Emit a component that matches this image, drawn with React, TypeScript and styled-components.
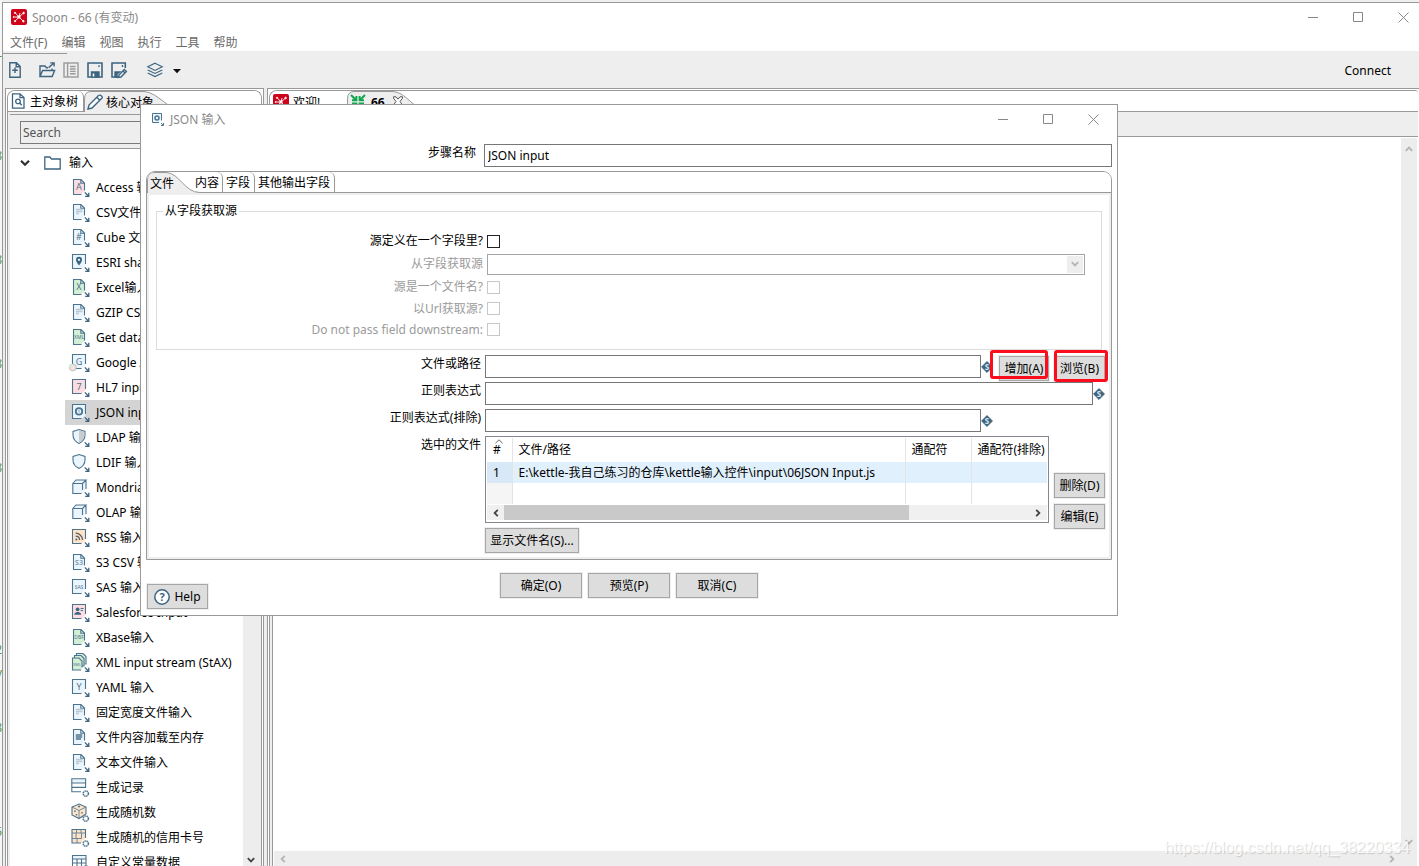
import React from "react";
import styled, { createGlobalStyle, css } from "styled-components";

const line = "#999999";
const face = "#eeeeee";
const ink = "#3d6480";
const softInk = "#4d748e";

const GlobalStyle = createGlobalStyle`
  *, *::before, *::after { box-sizing: border-box; }
  body { margin: 0; background: #efefef; }
  body, button, input, select, table {
    font-family: "Noto Sans", "Noto Sans CJK SC", sans-serif;
    font-size: 12px;
    line-height: 16px;
    color: #000;
  }
  button { padding: 0; border: 0; background: none; }
  svg { display: block; flex: none; overflow: visible; }
`;

const Desktop = styled.div`
  display: flex;
  height: 100vh;
  overflow: hidden;
  position: relative;
`;

const Gutter = styled.div`
  flex: none;
  width: 2px;
  overflow: hidden;
  color: #5a9433;
  background: #f6f6f6;
`;

const GutterCell = styled.div<{ $h: number }>`
  height: ${(p) => p.$h}px;
  display: flex;
  align-items: flex-end;
  justify-content: flex-end;
  line-height: 12px;
`;

const Window = styled.main`
  flex: 1;
  min-width: 0;
  margin-top: 2px;
  display: flex;
  flex-direction: column;
  border-top: 1px solid ${line};
  border-left: 1px solid ${line};
  background: ${face};
`;

const TitleBar = styled.header<{ $dialog?: boolean }>`
  flex: none;
  display: flex;
  align-items: center;
  gap: ${(p) => (p.$dialog ? 6 : 5)}px;
  height: 28px;
  padding: ${(p) => (p.$dialog ? "0 9px 0 10px" : "0 1px 0 8px")};
  background: #fff;
  color: #8a8a8a;
`;

const WindowTitle = styled.h1`
  flex: 1;
  margin: 0;
  padding-top: 2px;
  font-size: 12px;
  font-weight: 400;
  line-height: 16px;
`;

const WindowButtons = styled.div`
  display: flex;
  gap: 15px;
`;

const WindowButton = styled.button`
  width: 30px;
  height: 24px;
  display: flex;
  align-items: center;
  justify-content: center;
`;

const MenuBar = styled.nav`
  flex: none;
  display: flex;
  gap: 14px;
  height: 20px;
  padding: 4px 7px 0;
  background: #fff;
`;

const MenuItem = styled.button`
  height: 16px;
  color: #6a6a6a;
`;

const ToolBar = styled.div`
  flex: none;
  height: 37px;
  padding-top: 2px;
`;

const ToolBarRule = styled.div`
  width: 64px;
  height: 1px;
  background: ${line};
`;

const ToolRow = styled.div`
  display: flex;
  align-items: center;
  gap: 8px;
  height: 32px;
  padding: 0 28px 0 4px;
`;

const ToolButton = styled.button<{ $after?: number }>`
  margin-right: ${(p) => p.$after ?? 0}px;
`;

const Connect = styled.button`
  margin-left: auto;
  padding-top: 2px;
`;

const Workspace = styled.div`
  flex: 1;
  min-height: 0;
  display: flex;
  gap: 3px;
  padding-left: 2px;
`;

const Pane = styled.section<{ $side?: boolean }>`
  display: flex;
  min-width: 0;
  padding: 1px 1px 0 1px;
  background: #fff;
  border: solid ${line};
  ${(p) =>
    p.$side
      ? css`
          flex: none;
          width: 259px;
          border-width: 1px 1px 0 1px;
        `
      : css`
          flex: 1;
          border-width: 1px 0 0 1px;
        `}
`;

const Folder = styled.div<{ $open?: boolean }>`
  flex: 1;
  min-width: 0;
  display: flex;
  flex-direction: column;
  overflow: hidden;
  border: solid ${line};
  border-width: 1px 1px 0 1px;
  border-radius: 8px 8px 0 0;
  ${(p) => p.$open && "border-right-width: 0; border-radius: 8px 3px 0 0;"}
`;

const TabStrip = styled.div`
  flex: none;
  display: flex;
  height: 21px;
  border-bottom: 1px solid ${line};
  background: #fff;
`;

const Tab = styled.button<{ $w: number; $gap?: number; $edge?: boolean; $bold?: boolean }>`
  position: relative;
  flex: none;
  display: flex;
  align-items: center;
  gap: ${(p) => p.$gap ?? 5}px;
  width: ${(p) => p.$w}px;
  height: 21px;
  padding: 0 3px;
  white-space: nowrap;
  font-weight: ${(p) => (p.$bold ? 700 : 400)};
  ${(p) =>
    p.$edge &&
    css`
      height: 20px;
      border-right: 1px solid ${line};
      border-top-right-radius: 6px;
    `}
  & > * { position: relative; }
`;

const TabText = styled.span`
  padding-top: 2px;
`;

const TabShape = styled.svg`
  && { position: absolute; }
  left: 0;
  top: 0;
`;

const SideBody = styled.div`
  flex: 1;
  min-height: 0;
  display: flex;
  flex-direction: column;
  padding: 2px 0 0 2px;
  background: ${face};
`;

const SearchArea = styled.div`
  flex: none;
  padding: 6px 10px 4px;
  border-top: 1px solid ${line};
  border-bottom: 1px solid ${line};
`;

const SearchInput = styled.input`
  display: block;
  width: 100%;
  height: 23px;
  padding: 0 2px;
  border: 1px solid #7a7a7a;
  background: ${face};
  &::placeholder { color: #555; opacity: 1; }
`;

const TreeArea = styled.div`
  flex: 1;
  min-height: 0;
  display: flex;
  background: #fff;
`;

const Tree = styled.ul`
  flex: 1;
  min-width: 0;
  margin: 0;
  padding: 1px 0 0;
  overflow: hidden;
  list-style: none;
`;

const TreeGroup = styled.li`
  display: flex;
  align-items: center;
  height: 25px;
  padding-left: 10px;
`;

const GroupIcon = styled.span`
  padding: 0 8px 0 14px;
`;

const TreeRow = styled.li<{ $selected?: boolean }>`
  display: flex;
  align-items: center;
  gap: 5px;
  height: 25px;
  margin-left: 55px;
  padding-left: 6px;
  white-space: nowrap;
  background: ${(p) => (p.$selected ? "#d4d4d4" : "transparent")};
`;

const Scroll = styled.div<{ $row?: boolean }>`
  flex: none;
  display: flex;
  flex-direction: ${(p) => (p.$row ? "row" : "column")};
  align-items: center;
  justify-content: space-between;
  background: #ededed;
  padding: ${(p) => (p.$row ? "0 5px" : "7px 0 5px")};
`;

const SideScroll = styled(Scroll)`
  width: 18px;
  padding-bottom: 2px;
  padding-right: 2px;
`;

const CanvasBar = styled.div`
  flex: none;
  height: 25px;
  background: ${face};
  border-bottom: 1px solid ${line};
`;

const CanvasArea = styled.div`
  flex: 1;
  min-height: 0;
  display: grid;
  grid-template-columns: 1fr 16px;
  grid-template-rows: 1fr 15px;
  margin-left: 2px;
  padding: 1px 1px 0 1px;
  border-left: 1px solid ${line};
  box-shadow: -2px 0 0 ${face};
  background: #fff;
`;

const VScroll = styled(Scroll)`
  grid-column: 2;
  grid-row: 1;
`;

const HScroll = styled(Scroll)`
  grid-column: 1 / span 2;
  grid-row: 2;
  padding-right: 21px;
`;

const Watermark = styled.div`
  position: absolute;
  right: 9px;
  bottom: 7px;
  font: 16px/22px "Liberation Sans", sans-serif;
  color: rgba(255, 255, 255, 0.85);
  text-shadow: 1px 1px 1px rgba(0, 0, 0, 0.16);
`;

const Dialog = styled.section`
  position: absolute;
  top: 104px;
  left: 140px;
  right: 301px;
  min-width: 760px;
  display: flex;
  flex-direction: column;
  padding-bottom: 6px;
  border: 1px solid ${line};
  background: #fff;
`;

const NameRow = styled.div`
  display: flex;
  gap: 8px;
  padding: 11px 5px 4px 0;
`;

const NameLabel = styled.label`
  width: 335px;
  padding-top: 1px;
  text-align: right;
`;

const TextInput = styled.input`
  flex: 1;
  min-width: 0;
  height: 23px;
  padding: 0 3px;
  border: 1px solid #777;
  background: #fff;
`;

const DialogFolder = styled.div`
  margin: 0 5px;
  border: 1px solid ${line};
  border-radius: 9px 9px 0 0;
  overflow: hidden;
`;

const DialogPage = styled.div`
  padding: 0 1px 4px 7px;
  border: 2px solid ${face};
`;

const SourceGroup = styled.fieldset`
  min-width: 0;
  margin: 8px 6px 5px 0;
  padding: 11px 16px 9px 0;
  border: 1px solid #dcdcdc;
`;

const GroupLegend = styled.legend`
  margin-left: 6px;
  padding: 0 2px;
`;

const SourceRow = styled.div<{ $h: number; $off?: boolean }>`
  display: flex;
  align-items: center;
  gap: 4px;
  height: ${(p) => p.$h}px;
  color: ${(p) => (p.$off ? "#9b9b9b" : "#000")};
`;

const SourceLabel = styled.label`
  flex: none;
  width: 326px;
  text-align: right;
`;

const Check = styled.input`
  appearance: none;
  width: 13px;
  height: 13px;
  margin: 0;
  border: 1px solid #222;
  background: #fff;
  &:disabled { border-color: #c8c8c8; }
`;

const SelectBox = styled.div`
  flex: 1;
  display: flex;
  align-items: center;
  position: relative;
`;

const SourceSelect = styled.select`
  appearance: none;
  width: 100%;
  height: 21px;
  border: 1px solid #a5a5a5;
  border-radius: 0;
  background: #fff;
  opacity: 1;
`;

const SelectArrow = styled.span`
  position: absolute;
  right: 2px;
  top: 2px;
  width: 16px;
  height: 17px;
  display: flex;
  align-items: center;
  justify-content: center;
  background: ${face};
  pointer-events: none;
`;

const FieldRow = styled.div`
  display: flex;
  gap: 4px;
  padding-right: 3px;
  margin-bottom: 4px;
  &:last-child { margin-bottom: 0; }
`;

const FieldLabel = styled.label`
  flex: none;
  width: 325px;
  padding-top: 1px;
  text-align: right;
`;

const FieldMain = styled.div`
  flex: 1;
  min-width: 0;
  display: flex;
  align-items: center;
  height: 23px;
`;

const ButtonSlot = styled.div`
  position: relative;
  flex: none;
  width: 112px;
  display: flex;
  justify-content: flex-end;
  gap: 5px;
  height: 23px;
`;

const PushButton = styled.button<{ $w: number }>`
  flex: none;
  display: flex;
  align-items: center;
  justify-content: center;
  gap: 4px;
  width: ${(p) => p.$w}px;
  height: 25px;
  border: 1px solid #a6a6a6;
  box-shadow: 0 0 0 1px #eee;
  background: #dddddd;
  white-space: nowrap;
`;

const ActionButton = styled(PushButton)`
  margin-top: 1px;
`;

const Highlight = styled.span<{ $right: number; $w: number; $h: number }>`
  position: absolute;
  top: -5px;
  right: ${(p) => p.$right}px;
  width: ${(p) => p.$w}px;
  height: ${(p) => p.$h}px;
  border: 3px solid #fb0d1b;
  border-radius: 3px;
  pointer-events: none;
`;

const FileColumn = styled.div`
  flex: 1;
  min-width: 0;
  display: flex;
  flex-direction: column;
  gap: 5px;
`;

const FileList = styled.div`
  padding: 1px 1px 2px;
  border: 1px solid #828790;
`;

const FileTable = styled.table`
  width: 100%;
  table-layout: fixed;
  border-collapse: collapse;
  th, td {
    padding: 0 6px;
    border-right: 1px solid #e4e4e4;
    text-align: left;
    font-weight: 400;
    white-space: nowrap;
  }
  th:last-child, td:last-child { border-right: 0; padding-right: 0; }
  th { height: 24px; }
  td { height: 21px; }
  td:first-child { background: #f5f5f5; }
  tr.picked td { background: #e1f0fd; }
  tr.picked td:first-child { background: #d9e8f6; }
`;

const SortMark = styled.svg`
  position: absolute;
  left: 2px;
  top: -3px;
`;

const SortHead = styled.span`
  position: relative;
  display: block;
`;

const ListScroll = styled.div`
  display: flex;
  align-items: center;
  height: 15px;
  margin-top: 1px;
  padding: 0 5px;
  background: #f0f0f0;
`;

const ListTrack = styled.div`
  flex: 1;
  margin: 0 4px;
`;

const ListThumb = styled.div`
  width: 77%;
  height: 15px;
  background: #c9c9c9;
`;

const ListButtons = styled.div`
  flex: none;
  width: 52px;
  display: flex;
  flex-direction: column;
  gap: 6px;
  padding: 37px 0 0 1px;
`;

const Footer = styled.footer`
  display: grid;
  grid-template-columns: 1fr auto 1fr;
  padding: 13px 6px 0;
`;

const FooterMain = styled.div`
  display: flex;
  gap: 6px;
`;

const HelpButton = styled(PushButton)`
  margin-top: 11px;
`;

function SpoonLogo() {
  return (
    <svg width="16" height="16" viewBox="0 0 16 16">
      <rect width="16" height="16" rx="2" fill="#d0021b" />
      <g stroke="#fff" strokeWidth=".9" fill="#fff">
        <path d="M8 8L4 3.6M8 8L12.5 4M8 8H2.4M8 8L4.2 12M8 8L12.4 12.4M8 8L9 4" fill="none" />
        <circle cx="8" cy="8" r="1.2" />
        <circle cx="4" cy="3.8" r=".6" />
        <circle cx="12.6" cy="4" r=".8" />
        <circle cx="4" cy="12.2" r=".6" />
        <circle cx="12.4" cy="12.2" r=".8" />
        <circle cx="2.6" cy="8" r=".4" />
      </g>
    </svg>
  );
}

function Minus() {
  return <svg width="11" height="11" viewBox="0 0 11 11" stroke="#888" fill="none"><path d="M0 5.5H10" /></svg>;
}
function Square() {
  return <svg width="11" height="11" viewBox="0 0 11 11" stroke="#888" fill="none"><path d="M.5 .5H9.5V9.5H.5Z" /></svg>;
}
function Cross() {
  return <svg width="11" height="11" viewBox="0 0 11 11" stroke="#888" fill="none"><path d="M.5 .5L10.5 10.5M10.5 .5L.5 10.5" /></svg>;
}

const turns = { up: 180, down: 0, left: 90, right: -90 };
function Chevron({ dir, color = "#b4b4b4", size = 8 }: { dir: keyof typeof turns; color?: string; size?: number }) {
  return (
    <svg width={size} height={size} viewBox="0 0 8 8" fill="none" stroke={color} strokeWidth="1.8">
      <path d="M.8 2.2L4 5.4L7.2 2.2" transform={`rotate(${turns[dir]} 4 4)`} />
    </svg>
  );
}

function Controls() {
  return (
    <WindowButtons>
      <WindowButton aria-label="Minimize"><Minus /></WindowButton>
      <WindowButton aria-label="Maximize"><Square /></WindowButton>
      <WindowButton aria-label="Close"><Cross /></WindowButton>
    </WindowButtons>
  );
}

function ToolIcon({ name }: { name: string }) {
  const art: Record<string, React.ReactNode> = {
    add: <path d="M2.8 .8H9.5L13.2 4.5V15.2H2.8ZM9.2 1V4.8H13M8 5.5V11M5.2 8.3H10.8" />,
    open: (
      <>
        <path d="M1 14.5V4H6L7.5 5.8H9M1 14.5L3.6 8.5H15.6L13.2 14.5ZM13 8.3V6.5" />
        <path d="M9.6 5.6L14.6 1.2M11.2 .9H15.1V4.6" />
      </>
    ),
    list: (
      <g stroke="#9a9a9a">
        <rect x="1" y="1" width="14" height="14" />
        <path d="M4.6 1V15M7 4.5H12.6M7 7H12.6M7 9.4H12.6M7 11.8H12.6" />
      </g>
    ),
    save: (
      <>
        <path d="M1 1H15V15H1Z" strokeWidth="1.6" />
        <path d="M4.5 10H12V15H4.5Z" fill={ink} />
        <path d="M6.5 11.5V14.5" stroke="#fff" strokeWidth="1.6" />
        <path d="M12 3.2V5" />
      </>
    ),
    saveAs: (
      <>
        <path d="M7 15H1V1H14.3V6" strokeWidth="1.6" />
        <path d="M4 10H8.5L6 12V15H4Z" fill={ink} />
        <path d="M11.5 3V5" />
        <path d="M8 13L13.3 7.4L15.4 9.4L10 15L7.4 15.4ZM12 9L14 11" />
      </>
    ),
    layers: (
      <path d="M8 1.2L15.3 4.8L8 8.4L.7 4.8ZM.7 8L8 11.5L15.3 8M.7 11L8 14.6L15.3 11" strokeWidth="1.1" />
    ),
  };
  return (
    <svg width="16" height="16" viewBox="0 0 16 16" fill="none" stroke={ink} strokeWidth="1.4">
      {art[name]}
    </svg>
  );
}

type Kind = "doc" | "box" | "shieldHalf" | "shield" | "cube" | "stack" | "rows" | "dice" | "card" | "grid";
interface Step {
  label: string;
  kind: Kind;
  fill?: string;
  mark?: string;
  selected?: boolean;
}

const pale = "#eaf5fd";
const green = "#d3efd6";
const pink = "#fddde1";
const peach = "#fde3c8";

const steps: Step[] = [
  { label: "Access 输入", kind: "doc", fill: pink, mark: "A" },
  { label: "CSV文件输入", kind: "doc", mark: "lines" },
  { label: "Cube 文件输入", kind: "doc", mark: "#" },
  { label: "ESRI shapefile输入", kind: "box", mark: "pin" },
  { label: "Excel输入", kind: "doc", fill: green, mark: "X" },
  { label: "GZIP CSV输入", kind: "doc", mark: "lines" },
  { label: "Get data from XML", kind: "doc", fill: green, mark: "XML" },
  { label: "Google Analytics", kind: "box", mark: "G" },
  { label: "HL7 input", kind: "box", fill: pink, mark: "7" },
  { label: "JSON input", kind: "box", mark: "json", selected: true },
  { label: "LDAP 输入", kind: "shieldHalf" },
  { label: "LDIF 输入", kind: "shield" },
  { label: "Mondrian 输入", kind: "cube" },
  { label: "OLAP 输入", kind: "cube" },
  { label: "RSS 输入", kind: "box", fill: peach, mark: "rss" },
  { label: "S3 CSV 输入", kind: "doc", mark: "S3" },
  { label: "SAS 输入", kind: "box", mark: "SAS" },
  { label: "Salesforce Input", kind: "box", fill: pink, mark: "person" },
  { label: "XBase输入", kind: "doc", fill: green, mark: "DBF" },
  { label: "XML input stream (StAX)", kind: "stack", fill: green },
  { label: "YAML 输入", kind: "box", mark: "Y" },
  { label: "固定宽度文件输入", kind: "doc", mark: "lines" },
  { label: "文件内容加载至内存", kind: "doc", mark: "dark" },
  { label: "文本文件输入", kind: "doc", mark: "lines" },
  { label: "生成记录", kind: "rows" },
  { label: "生成随机数", kind: "dice" },
  { label: "生成随机的信用卡号", kind: "card" },
  { label: "自定义常量数据", kind: "grid" },
];

function StepMark({ mark }: { mark: string }) {
  switch (mark) {
    case "lines":
      return <path d="M5 6.5H11.5M5 8.5H11.5M5 10.5H8" stroke="#b9c9d5" strokeWidth="1.4" />;
    case "dark":
      return <path d="M4.8 7H11.2M4.8 9H11.2M4.8 11H10" strokeWidth="1.4" />;
    case "pin":
      return (
        <>
          <path d="M8 12.5C6 9.8 5 8.3 5 6.8A3 3 0 0 1 11 6.8C11 8.3 10 9.8 8 12.5Z" fill={ink} stroke="none" />
          <circle cx="8" cy="6.8" r="1.1" fill="#fff" stroke="none" />
        </>
      );
    case "json":
      return (
        <>
          <circle cx="8" cy="8.4" r="3.2" strokeWidth="1.8" />
          <path d="M8 7V9.6" stroke="#8aa4b8" />
        </>
      );
    case "rss":
      return (
        <>
          <path d="M4.6 5.2A7 7 0 0 1 11.6 12M4.6 8.2A4 4 0 0 1 8.6 12" stroke="#5a5f66" strokeWidth="1.3" />
          <circle cx="5.4" cy="11.4" r="1" fill="#5a5f66" stroke="none" />
        </>
      );
    case "person":
      return (
        <>
          <circle cx="6.6" cy="6.3" r="1.9" fill={ink} stroke="none" />
          <path d="M3.4 11.8V10.4L5.6 9H7.8L10 10.4V11.8Z" fill={ink} stroke="none" />
          <path d="M9.6 5.5H12.6M9.6 7.5H12" />
        </>
      );
    default: {
      const small = mark.length > 2;
      return (
        <text
          x={8}
          y={small ? 10.6 : 11.6}
          textAnchor="middle"
          fontSize={small ? 5 : mark.length > 1 ? 7 : 9}
          fill={softInk}
          stroke="none"
        >
          {mark}
        </text>
      );
    }
  }
}

function StepIcon({ kind, fill = pale, mark }: Step) {
  const gear = kind === "rows" || kind === "dice" || kind === "card" || kind === "grid";
  return (
    <svg width="20" height="20" viewBox="0 0 20 20" fill="none" stroke={softInk} strokeWidth="1.1">
      {kind === "doc" && (
        <>
          <path d="M2.5 1.5H10L13.5 5V13L10 16.5H2.5Z" fill={fill} stroke="none" />
          <path d="M10.5 16.5H2.5V1.5H10L13.5 5V12.5M9.8 1.5V5.2H13.5" />
        </>
      )}
      {kind === "box" && (
        <>
          <path d="M1.5 1.5H14.5V12L11 15.5H1.5Z" fill={fill} stroke="none" />
          <path d="M10.5 15.5H1.5V1.5H14.5V11" />
        </>
      )}
      {(kind === "shield" || kind === "shieldHalf") && (
        <>
          <path d="M8 1.5L14 3.5V7C14 10.5 12 13.5 8 15.5C4 13.5 2 10.5 2 7V3.5Z" fill={pale} />
          {kind === "shieldHalf" && <path d="M8 2.2L13.4 4V7C13.4 10.3 11.6 13 8 14.8Z" fill="#c9cdd0" stroke="none" />}
        </>
      )}
      {kind === "cube" && (
        <>
          <path d="M1.8 5.5L5 2H15V11L11.5 15.5H1.8Z" fill={pale} stroke="none" />
          <path d="M10.5 15.5H1.8V5.5H11.5V12M1.8 5.5L5 2H15L11.5 5.5M15 2V11" />
        </>
      )}
      {kind === "stack" && (
        <>
          <path d="M5.5 3.5V.5H12L15 3.5V11H13.5" fill={fill} />
          <path d="M3.5 5V2.5H10L13 5.5V13H11" fill={fill} />
          <path d="M10 17H1.5V5H8L11 8V14.5" fill={fill} />
          <text x="6" y="13" fontSize="4" textAnchor="middle" fill={softInk} stroke="none">XML</text>
        </>
      )}
      {kind === "rows" && (
        <>
          <path d="M.8 .8H14.6V5H.8Z" fill={pale} />
          <path d="M14.6 5V10M10 13.8H.8V5M.8 9.4H14.6" />
        </>
      )}
      {kind === "dice" && (
        <>
          <path d="M8 1L15 4V11L8 15.5L1 12V4Z" fill={peach} />
          <path d="M1 4L8 7.5L15 4M8 7.5V15" strokeWidth=".8" />
          <path d="M4 7.5V9M5.5 11V12.5M11 9V10.5M7 3.5H9" strokeWidth="1.4" />
        </>
      )}
      {kind === "card" && (
        <>
          <path d="M1 1.5H14.5V10L10 15H1Z" fill={peach} stroke="none" />
          <path d="M10 15H1V1.5H14.5V10" />
          <path d="M5 5H10.5V10.5H5ZM1 5H5M1 10.5H5M10.5 5H14.5M5.5 1.5V5M10 1.5V5M6 10.5V15" strokeWidth=".8" />
        </>
      )}
      {kind === "grid" && (
        <>
          <path d="M1.5 2.5H15V6H1.5Z" fill={pale} />
          <path d="M1.5 15.5V6M15 6V15M6 6V15.5M10.5 6V15.5M1.5 10H15" />
        </>
      )}
      {mark && <StepMark mark={mark} />}
      {mark === "G" && (
        <>
          <circle cx="1.8" cy="14.5" r="3.4" fill={pink} stroke="#9db3a6" strokeWidth=".7" />
          <path d="M1.8 14.5V11.1A3.4 3.4 0 0 0 -1.6 14.5Z" fill={green} stroke="none" />
        </>
      )}
      {gear ? (
        <circle cx="14.8" cy="15.6" r="2.6" strokeWidth="1.6" strokeDasharray="1.5 .6" fill="#fff" />
      ) : (
        <path d="M13.8 14.4L17.4 18M17.8 14.8V18.3H14.2" strokeWidth="1.3" stroke={ink} />
      )}
    </svg>
  );
}

function Variable() {
  return (
    <svg width="12" height="12" viewBox="0 0 12 12" role="img" aria-label="Variable">
      <path d="M6 .6L11.4 6L6 11.4L.6 6Z" fill={ink} stroke={ink} strokeLinejoin="round" />
      <text x="6" y="9" fontSize="8" fontWeight="700" textAnchor="middle" fill="#dfe8ee">S</text>
    </svg>
  );
}

function SelectedShape({ flat, width }: { flat: number; width: number }) {
  const end = width - 1;
  const d = `M.5 21V8Q.5 .5 7 .5H${flat}C${flat + 14} 1 ${end - 16} 20.5 ${end} 20.5`;
  return (
    <TabShape width={width} height="21" viewBox={`0 0 ${width} 21`}>
      <path d={`${d}V21H.5Z`} fill={face} />
      <path d={d} fill="none" stroke={line} />
    </TabShape>
  );
}

const gutter: [number, string][] = [
  [62, "-"], [100, "8"], [104, "8"], [104, "8"], [104, "8"],
  [182, "2"], [23, "y"], [55, "8"], [104, "5"], [28, "1"],
];

export default function App() {
  return (
    <>
      <GlobalStyle />
      <Desktop>
        <Gutter aria-hidden="true">
          {gutter.map(([h, c], i) => <GutterCell key={i} $h={h}>{c}</GutterCell>)}
        </Gutter>
        <Window>
          <TitleBar>
            <SpoonLogo />
            <WindowTitle>Spoon - 66 (有变动)</WindowTitle>
            <Controls />
          </TitleBar>
          <MenuBar>
            {["文件(F)", "编辑", "视图", "执行", "工具", "帮助"].map((m) => <MenuItem key={m}>{m}</MenuItem>)}
          </MenuBar>
          <ToolBar>
            <ToolBarRule />
            <ToolRow>
              <ToolButton aria-label="New" $after={8}><ToolIcon name="add" /></ToolButton>
              <ToolButton aria-label="Open"><ToolIcon name="open" /></ToolButton>
              <ToolButton aria-label="Explore"><ToolIcon name="list" /></ToolButton>
              <ToolButton aria-label="Save"><ToolIcon name="save" /></ToolButton>
              <ToolButton aria-label="Save as" $after={12}><ToolIcon name="saveAs" /></ToolButton>
              <ToolButton aria-label="Perspective"><ToolIcon name="layers" /></ToolButton>
              <ToolButton aria-label="More perspectives">
                <svg width="12" height="8" viewBox="0 0 12 8"><path d="M2 3H10L6 7.2Z" fill="#111" /></svg>
              </ToolButton>
              <Connect>Connect</Connect>
            </ToolRow>
          </ToolBar>
          <Workspace>
            <Pane $side>
              <Folder>
                <TabStrip>
                  <Tab $w={76} $edge $gap={4}>
                    <svg width="15" height="16" viewBox="0 0 15 16" fill="none" stroke={ink} strokeWidth="1.3">
                      <path d="M1.5 .8H9L13 4.5V15.2H1.5ZM9 .8V4.6H13" />
                      <circle cx="7" cy="8.4" r="2.3" /><path d="M8.7 10L10.8 12.2" />
                    </svg>
                    <TabText>主对象树</TabText>
                  </Tab>
                  <Tab $w={100} $gap={3}>
                    <SelectedShape flat={60} width={102} />
                    <svg width="16" height="16" viewBox="0 0 16 16" fill="none" stroke={ink} strokeWidth="1.4">
                      <path d="M1 15L2 11L11.5 1.5Q13 .5 14.5 2T14.5 4.5L5 14ZM9.8 3.2L12.8 6.2" fill="#fff" />
                    </svg>
                    <TabText>核心对象</TabText>
                  </Tab>
                </TabStrip>
                <SideBody>
                  <SearchArea><SearchInput placeholder="Search" aria-label="Search" /></SearchArea>
                  <TreeArea>
                    <Tree>
                      <TreeGroup>
                        <Chevron dir="down" color="#333" size={10} />
                        <GroupIcon>
                          <svg width="17" height="14" viewBox="0 0 17 14" fill="none" stroke={ink} strokeWidth="1.3">
                            <path d="M.8 1H5.8L7.5 3H16.2V13H.8Z" />
                          </svg>
                        </GroupIcon>
                        <span>输入</span>
                      </TreeGroup>
                      {steps.map((s) => (
                        <TreeRow key={s.label} $selected={s.selected}>
                          <StepIcon {...s} />
                          <span>{s.label}</span>
                        </TreeRow>
                      ))}
                    </Tree>
                    <SideScroll>
                      <Chevron dir="up" color="#444" />
                      <Chevron dir="down" color="#444" />
                    </SideScroll>
                  </TreeArea>
                </SideBody>
              </Folder>
            </Pane>
            <Pane>
              <Folder $open>
                <TabStrip>
                  <Tab $w={77} $gap={4}>
                    <SpoonLogo />
                    <TabText>欢迎!</TabText>
                  </Tab>
                  <Tab $w={80} $gap={5} $bold>
                    <SelectedShape flat={46} width={84} />
                    <svg width="16" height="16" viewBox="0 0 16 16" fill="none" stroke="#12a650" strokeWidth="2">
                      <path d="M1 1L6 6M2 6.2H6.4V2M15 1L10 6M14 6.2H9.6V2M1 15L6 10M2 9.6H6.4V14M15 15L10 10M14 9.6H9.6V14" />
                    </svg>
                    <TabText>66</TabText>
                    <svg width="14" height="12" viewBox="-2 0 14 12" fill="#fff" stroke="#555">
                      <path d="M1.5 .8H4L6 3.2L8 .8H10.5V2.2L8 5.5L10.5 9V10.4H8L6 8L4 10.4H1.5V9L4 5.5L1.5 2.2Z" />
                    </svg>
                  </Tab>
                </TabStrip>
                <CanvasBar />
                <CanvasArea>
                  <VScroll><Chevron dir="up" /><Chevron dir="down" /></VScroll>
                  <HScroll $row><Chevron dir="left" /><Chevron dir="right" /></HScroll>
                </CanvasArea>
              </Folder>
            </Pane>
          </Workspace>
        </Window>

        <Dialog role="dialog" aria-label="JSON 输入">
          <TitleBar as="div" $dialog>
            <svg width="13" height="14" viewBox="0 0 13 14" fill="none" stroke={softInk}>
              <path d="M8 10.5H1.5V1.5H10.5V8.5" fill={pale} />
              <circle cx="6" cy="6" r="2" strokeWidth="1.5" />
              <path d="M10 11L12 13M12.5 11V13.5H10" />
            </svg>
            <WindowTitle as="h2">JSON 输入</WindowTitle>
            <Controls />
          </TitleBar>
          <NameRow>
            <NameLabel htmlFor="step">步骤名称</NameLabel>
            <TextInput id="step" defaultValue="JSON input" />
          </NameRow>
          <DialogFolder>
            <TabStrip>
              <Tab $w={45}>
                <SelectedShape flat={19} width={54} />
                <TabText>文件</TabText>
              </Tab>
              <Tab $w={31} $edge><TabText>内容</TabText></Tab>
              <Tab $w={32} $edge><TabText>字段</TabText></Tab>
              <Tab $w={80} $edge><TabText>其他输出字段</TabText></Tab>
            </TabStrip>
            <DialogPage>
              <SourceGroup>
                <GroupLegend>从字段获取源</GroupLegend>
                <SourceRow $h={22}>
                  <SourceLabel htmlFor="in-field">源定义在一个字段里?</SourceLabel>
                  <Check id="in-field" type="checkbox" />
                </SourceRow>
                <SourceRow $h={24} $off>
                  <SourceLabel htmlFor="source">从字段获取源</SourceLabel>
                  <SelectBox>
                    <SourceSelect id="source" disabled />
                    <SelectArrow><Chevron dir="down" /></SelectArrow>
                  </SelectBox>
                </SourceRow>
                <SourceRow $h={22} $off>
                  <SourceLabel htmlFor="is-file">源是一个文件名?</SourceLabel>
                  <Check id="is-file" type="checkbox" disabled />
                </SourceRow>
                <SourceRow $h={21} $off>
                  <SourceLabel htmlFor="as-url">以Url获取源?</SourceLabel>
                  <Check id="as-url" type="checkbox" disabled />
                </SourceRow>
                <SourceRow $h={21} $off>
                  <SourceLabel htmlFor="no-pass">Do not pass field downstream:</SourceLabel>
                  <Check id="no-pass" type="checkbox" disabled />
                </SourceRow>
              </SourceGroup>
              <FieldRow>
                <FieldLabel htmlFor="path">文件或路径</FieldLabel>
                <FieldMain>
                  <TextInput id="path" />
                  <Variable />
                  <ButtonSlot>
                    <ActionButton $w={50}>增加(A)</ActionButton>
                    <ActionButton $w={51}>浏览(B)</ActionButton>
                    <Highlight $right={57} $w={58} $h={29} />
                    <Highlight $right={-3} $w={54} $h={32} />
                  </ButtonSlot>
                </FieldMain>
              </FieldRow>
              <FieldRow>
                <FieldLabel htmlFor="regex">正则表达式</FieldLabel>
                <FieldMain><TextInput id="regex" /><Variable /></FieldMain>
              </FieldRow>
              <FieldRow>
                <FieldLabel htmlFor="exclude">正则表达式(排除)</FieldLabel>
                <FieldMain><TextInput id="exclude" /><Variable /><ButtonSlot /></FieldMain>
              </FieldRow>
              <FieldRow>
                <FieldLabel as="span" id="files">选中的文件</FieldLabel>
                <FileColumn>
                  <FileList>
                    <FileTable aria-labelledby="files">
                      <colgroup>
                        <col style={{ width: 25 }} /><col /><col style={{ width: 66 }} /><col style={{ width: 76 }} />
                      </colgroup>
                      <thead>
                        <tr>
                          <th>
                            <SortHead>
                              #
                              <SortMark width="8" height="5" viewBox="0 0 8 5" fill="none" stroke="#666">
                                <path d="M.5 4.2L4 .8L7.5 4.2" />
                              </SortMark>
                            </SortHead>
                          </th>
                          <th>文件/路径</th>
                          <th>通配符</th>
                          <th>通配符(排除)</th>
                        </tr>
                      </thead>
                      <tbody>
                        <tr className="picked">
                          <td>1</td>
                          <td>E:\kettle-我自己练习的仓库\kettle输入控件\input\06JSON Input.js</td>
                          <td />
                          <td />
                        </tr>
                        <tr><td /><td /><td /><td /></tr>
                      </tbody>
                    </FileTable>
                    <ListScroll>
                      <Chevron dir="left" color="#444" />
                      <ListTrack><ListThumb /></ListTrack>
                      <Chevron dir="right" color="#444" />
                    </ListScroll>
                  </FileList>
                  <PushButton $w={94}>显示文件名(S)...</PushButton>
                </FileColumn>
                <ListButtons>
                  <PushButton $w={51}>删除(D)</PushButton>
                  <PushButton $w={51}>编辑(E)</PushButton>
                </ListButtons>
              </FieldRow>
            </DialogPage>
          </DialogFolder>
          <Footer>
            <HelpButton $w={61}>
              <svg width="16" height="16" viewBox="0 0 16 16">
                <circle cx="8" cy="8" r="7.2" fill="#fff" stroke={ink} strokeWidth="1.5" />
                <text x="8" y="12" fontSize="11" fontWeight="700" textAnchor="middle" fill={ink}>?</text>
              </svg>
              Help
            </HelpButton>
            <FooterMain>
              <PushButton $w={82}>确定(O)</PushButton>
              <PushButton $w={82}>预览(P)</PushButton>
              <PushButton $w={82}>取消(C)</PushButton>
            </FooterMain>
          </Footer>
        </Dialog>
        <Watermark>https://blog.csdn.net/qq_38220334</Watermark>
      </Desktop>
    </>
  );
}
